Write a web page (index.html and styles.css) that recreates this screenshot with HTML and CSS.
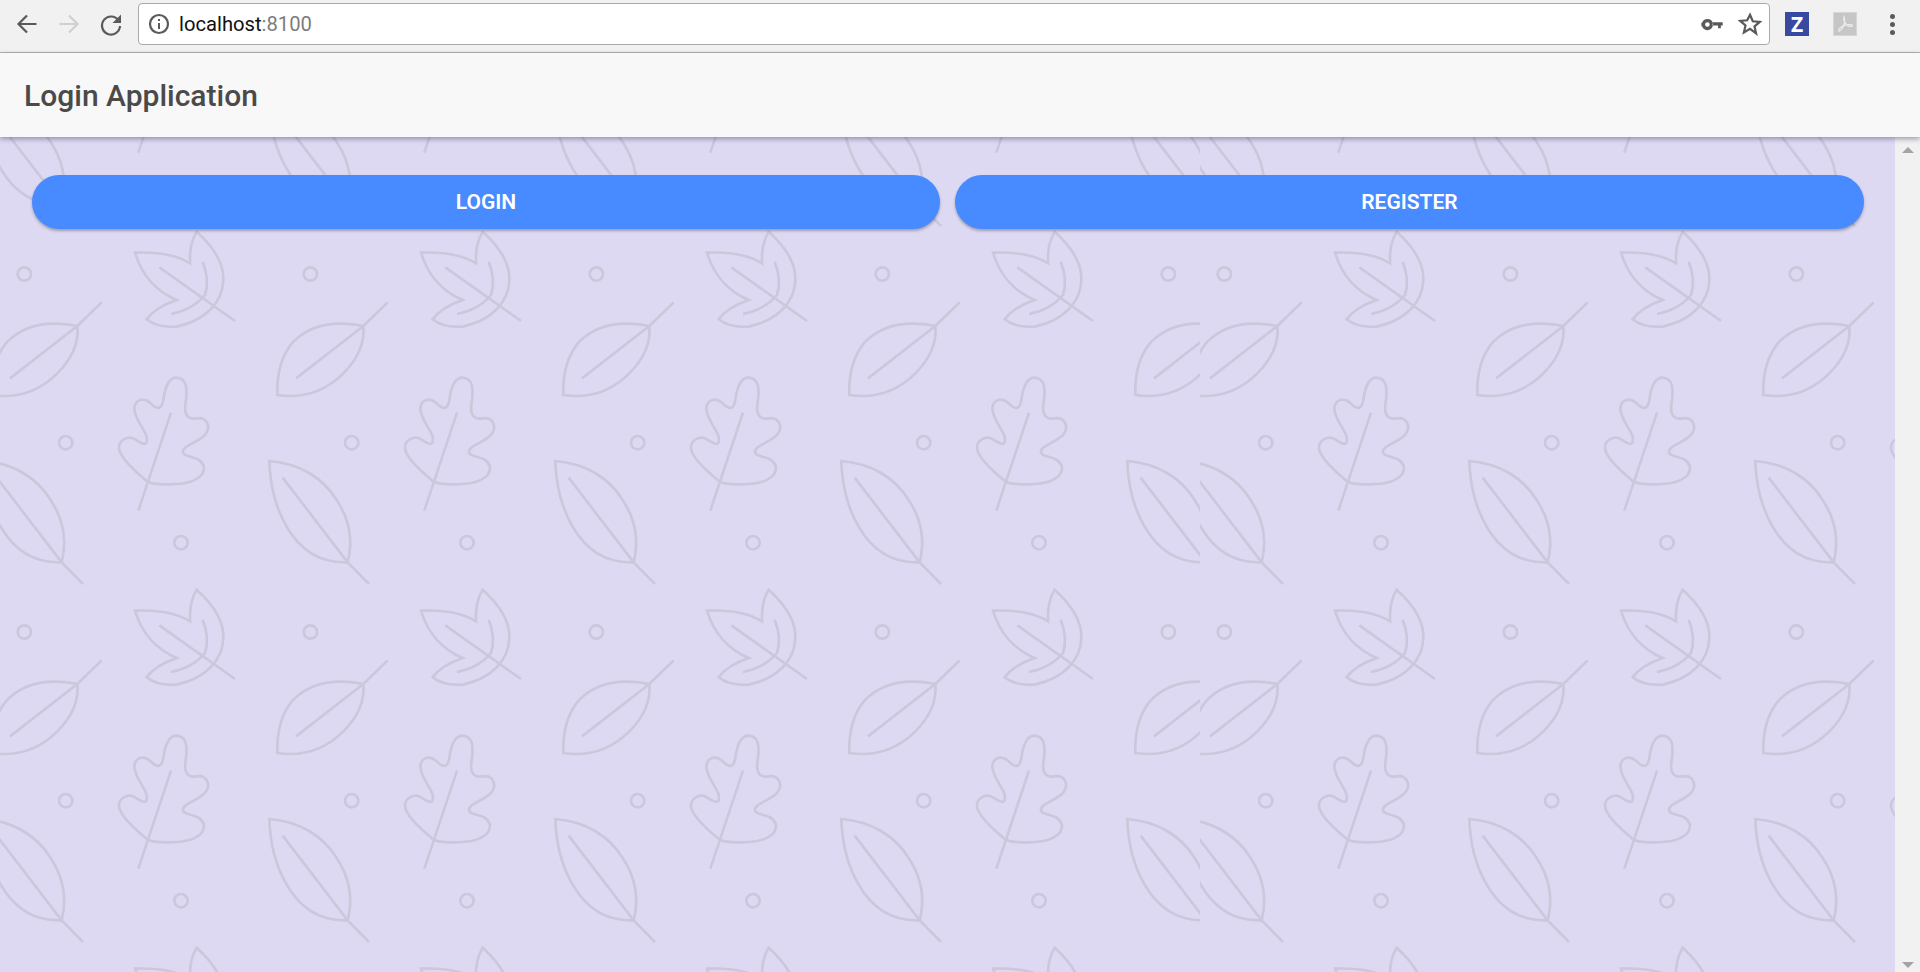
FILE: index.html
```html
<!DOCTYPE html>
<html lang="en">
<head>
<meta charset="utf-8">
<title>Login Application</title>
<link rel="stylesheet" href="styles.css">
</head>
<body>
<div class="browser-bar">
  <div class="nav-icons">
    <svg class="icon" viewBox="0 0 24 24"><path class="st-dark" d="M21.5 12H4M12 3.5 3.5 12l8.500 8.500"/></svg>
    <svg class="icon" viewBox="0 0 24 24"><path class="st-light" d="M2.500 12H20M12 3.500 20.500 12 12 20.500"/></svg>
    <svg class="icon" viewBox="0 0 24 24"><path class="st-dark" d="M19.500 8.500A9 9 0 1 0 21 14"/><path class="fill-dark" d="M22 2.500V11h-8.500z"/></svg>
  </div>
  <div class="omnibox">
    <svg class="info" viewBox="0 0 22 22"><circle class="st-dark" cx="11" cy="11" r="9"/><path class="fill-dark" d="M10 6h2v2h-2zM10 10h2v6h-2z"/></svg>
    <span class="url">localhost<span class="port">:8100</span></span>
    <svg class="key" viewBox="0 0 24 14"><path class="fill-dark" d="M6.500 1a6 6 0 1 1-5.700 8H0V5h.8A6 6 0 0 1 6.500 1zm0 3.500a2.500 2.500 0 1 0 0 5 2.500 2.500 0 0 0 0-5zM12 4.500h11V8h-2v3h-3V8h-6z"/></svg>
    <svg class="star" viewBox="0 0 24 24"><path class="st-dark" d="m12 2.800 2.800 6.500 7 .6-5.300 4.600 1.600 6.900L12 16.800l-6.100 3.600 1.600-6.900-5.300-4.600 7-.6z"/></svg>
  </div>
  <div class="ext-icons">
    <span class="ext-z">Z</span>
    <span class="ext-pdf"><svg viewBox="0 0 24 24"><path class="st-pdf" d="M11 4c-1 3 1 7 3 9s5 2 6 1-3-2-7-1-8 4-8 6 3 0 5-4 2-8 1-11z"/></svg></span>
    <span class="menu"><i></i><i></i><i></i></span>
  </div>
</div>
<header class="app-header"><h1 class="app-title">Login Application</h1></header>
<div class="viewport">
  <main class="content">
    <button class="pill">LOGIN</button>
    <button class="pill">REGISTER</button>
  </main>
  <div class="scrollbar"><span class="arrow-up"></span><span class="arrow-down"></span></div>
</div>
</body>
</html>
```
FILE: styles.css
```css
* { box-sizing: border-box; }
html, body { height: 100%; }
body {
  margin: 0;
  height: 972px;
  overflow: hidden;
  display: flex;
  flex-direction: column;
  font-family: Roboto, "Liberation Sans", sans-serif;
  background: #f1f1f1;
}
.browser-bar {
  height: 53px;
  flex: none;
  display: flex;
  align-items: flex-start;
  background: #f1f1f1;
  border-bottom: 1px solid #b0b0b0;
}
.nav-icons {
  display: flex;
  gap: 18px;
  width: 138px;
  padding: 12px 0 0 15px;
}
.icon { width: 24px; height: 24px; flex: none; }
.st-dark { fill: none; stroke: #5a5a5a; stroke-width: 2.200; }
.st-light { fill: none; stroke: #cfcfcf; stroke-width: 2.200; }
.fill-dark { fill: #5a5a5a; fill-rule: evenodd; }
.st-pdf { fill: none; stroke: #ececec; stroke-width: 1.300; }
.omnibox {
  width: 1632px;
  height: 42px;
  margin-top: 3px;
  flex: none;
  display: flex;
  align-items: center;
  padding: 0 7px 0 10px;
  background: #fff;
  border: 1px solid #a9a9a9;
  border-radius: 4px;
}
.info { width: 22px; height: 22px; flex: none; margin-left: -1px; }
.url {
  margin-left: 9px;
  flex: 1;
  font-size: 20.200px;
  color: #111;
}
.port { color: #7c7c7c; }
.key { width: 23px; height: 13px; flex: none; margin-right: 14px; }
.star { width: 24px; height: 24px; flex: none; }
.ext-icons {
  display: flex;
  align-items: center;
  height: 48px;
  padding-left: 15px;
}
.ext-z {
  width: 24px;
  height: 24px;
  background: #3949a0;
  color: #fff;
  font-family: "Open Sans", sans-serif;
  font-weight: 700;
  font-size: 21px;
  line-height: 24px;
  text-align: center;
}
.ext-pdf {
  width: 24px;
  height: 24px;
  margin-left: 24px;
  background: #c6c6c6;
  border: 1px solid #d6d6d6;
}
.ext-pdf svg { display: block; width: 22px; height: 22px; }
.menu {
  display: flex;
  flex-direction: column;
  gap: 3px;
  margin-left: 33px;
}
.menu i { display: block; width: 5px; height: 5px; border-radius: 50%; background: #5a5a5a; }
.app-header {
  height: 84px;
  flex: none;
  display: flex;
  align-items: center;
  padding: 0 24px;
  background: #f8f8f8;
  box-shadow: 0 2px 5px rgba(60, 50, 90, .45);
  position: relative;
  z-index: 1;
}
.app-title {
  margin: 0;
  font-size: 30px;
  font-weight: 500;
  color: #4a4a4a;
}
.viewport {
  flex: 1;
  display: flex;
  min-height: 0;
}
.content {
  flex: 1;
  display: flex;
  align-items: flex-start;
  gap: 15px;
  padding: 38px 31px 0 32px;
  background-color: #ddd9f3;
  background-image: url("data:image/svg+xml,<svg xmlns='http://www.w3.org/2000/svg' width='1200' height='358'><defs><filter id='b' x='-5%25' y='-5%25' width='110%25' height='110%25'><feGaussianBlur stdDeviation='.55'/></filter><g id='t' fill='none' stroke='%23cac8da' stroke-width='8' transform='scale(.33333)'><circle cx='73' cy='132' r='20'/><circle cx='197' cy='638' r='20'/><circle cx='543' cy='938' r='20'/><path d='M405 68C470 65 530 75 570 100C568 65 575 30 590 5C640 50 672 100 670 150C668 215 620 270 530 290C495 292 460 285 440 268C460 240 495 222 530 210C470 185 425 135 405 68Z'/><path d='M478 112L705 273M608 95C622 130 625 165 615 195C590 225 550 245 513 252'/><path d='M1163 217L1090 288C1000 270 930 285 880 335C845 375 830 430 832 495C900 505 970 490 1030 430C1075 385 1095 340 1090 288L888 445'/><path d='M808 693C900 700 970 745 1010 810C1050 870 1060 930 1043 997C960 1000 900 960 860 890C825 830 810 760 808 693Z'/><path d='M848 743L1043 997L1107 1062'/><path d='M443 755C400 720 360 680 357 655C355 630 385 615 405 628C425 640 445 655 440 620C430 590 405 570 403 535C405 510 430 500 450 518C470 540 485 540 490 510C495 470 505 443 530 443C560 445 562 475 558 510C550 550 560 570 590 565C620 560 635 590 615 615C590 640 540 650 550 670C560 685 600 675 612 710C615 745 570 765 500 763C470 763 450 760 443 755Z'/><path d='M415 842L513 548'/></g></defs><g filter='url(%23b)'><use href='%23t' x='-286'/><use href='%23t' x='0'/><use href='%23t' x='286'/><use href='%23t' x='572'/><use href='%23t' x='858'/><use href='%23t' x='1144'/></g></svg>");
  background-repeat: repeat;
  background-position: 0 93px;
}
.pill {
  flex: 1;
  height: 54px;
  padding: 0 0 1px;
  border: 0;
  border-radius: 27px;
  background: #488aff;
  color: #fff;
  font-family: Roboto, "Liberation Sans", sans-serif;
  font-size: 21px;
  font-weight: 600;
  box-shadow: 0 2px 3px rgba(0, 0, 0, .28);
}
.pill:first-child { flex: 0 0 908px; }
.scrollbar {
  width: 25px;
  flex: none;
  display: flex;
  flex-direction: column;
  justify-content: space-between;
  align-items: center;
  padding: 10px 0 4px;
  background: #f1f1f1;
}
.arrow-up, .arrow-down {
  width: 0;
  height: 0;
  border-left: 6px solid transparent;
  border-right: 6px solid transparent;
}
.arrow-up { border-bottom: 6px solid #a3a3a3; }
.arrow-down { border-top: 6px solid #a3a3a3; }
```
